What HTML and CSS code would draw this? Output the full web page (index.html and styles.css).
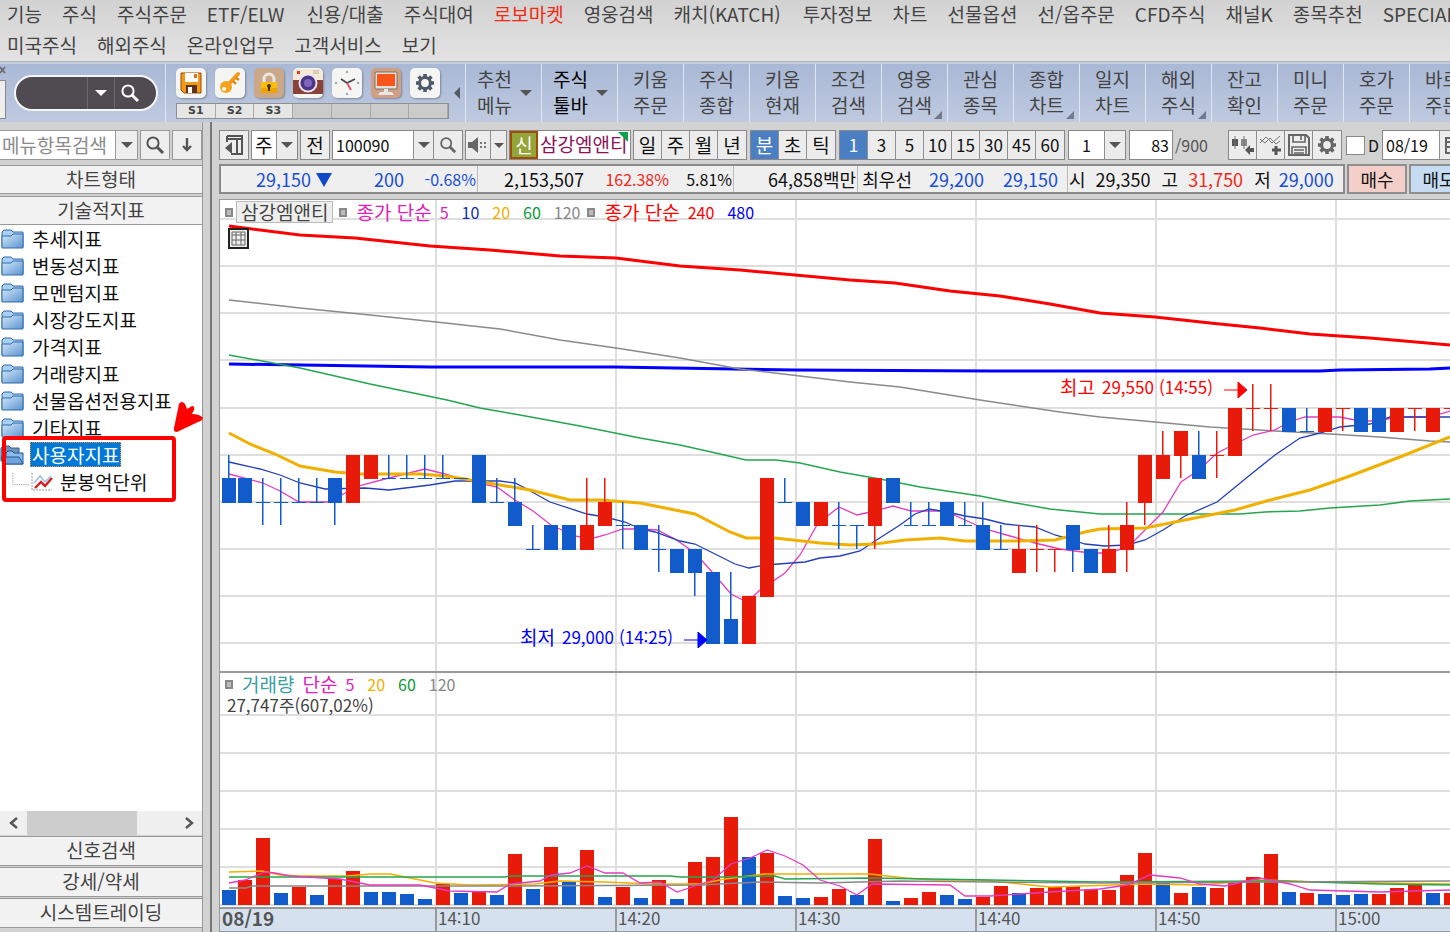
FILE: index.html
```html
<!DOCTYPE html>
<html lang="ko">
<head>
<meta charset="utf-8">
<meta name="viewport" content="width=device-width, initial-scale=1">
<title>키움종합차트</title>
<link rel="stylesheet" href="styles.css">
</head>
<body>
<svg class="defs" width="0" height="0" aria-hidden="true">
  <defs>
    <linearGradient id="folderFill" x1="0" y1="0" x2="1" y2="1"><stop offset="0" stop-color="#d4e9fb"/><stop offset="1" stop-color="#5b93cf"/></linearGradient>
    <symbol id="folder" viewBox="0 0 24 20">
      <path d="M2 18V3l2-2h7l2 2h10v15z" fill="#a9cff2" stroke="#2f6aa8" stroke-width="1"/>
      <path d="M2 7h9l2-2h10v14H2z" fill="url(#folderFill)" stroke="#2f6aa8" stroke-width="1"/>
    </symbol>
    <symbol id="lens" viewBox="0 0 20 20">
      <circle cx="8" cy="8" r="5.6" fill="none" stroke="currentColor" stroke-width="2"/>
      <path d="M12 12l6 6" stroke="currentColor" stroke-width="3"/>
    </symbol>
    <symbol id="gear" viewBox="0 0 20 20">
      <circle cx="10" cy="10" r="5.4" fill="none" stroke="currentColor" stroke-width="3"/>
      <g stroke="currentColor" stroke-width="3.6"><path d="M10 1v3M10 16v3M1 10h3M16 10h3M3.6 3.6l2.2 2.2M14.2 14.2l2.2 2.2M3.6 16.4l2.2-2.2M14.2 5.8l2.2-2.2"/></g>
    </symbol>
  </defs>
</svg>

<div class="app">
  <nav class="menu" aria-label="주 메뉴">
    <div class="menu-row">
      <a href="#">기능</a><a href="#">주식</a><a href="#">주식주문</a><a href="#" class="latin">ETF/ELW</a><a href="#">신용/대출</a><a href="#">주식대여</a><a href="#" class="hot">로보마켓</a><a href="#">영웅검색</a><a href="#" class="latin">캐치(KATCH)</a><a href="#">투자정보</a><a href="#">차트</a><a href="#">선물옵션</a><a href="#">선/옵주문</a><a href="#">CFD주식</a><a href="#">채널K</a><a href="#">종목추천</a><a href="#">SPECIAL</a>
    </div>
    <div class="menu-row">
      <a href="#">미국주식</a><a href="#">해외주식</a><a href="#">온라인업무</a><a href="#">고객서비스</a><a href="#">보기</a>
    </div>
  </nav>

  <header class="toolbar">
    <div class="quick">
      <div class="grip"><svg width="6" height="8" viewBox="0 0 6 8"><path d="M0 1l5 6M5 1L0 7" stroke="#666" stroke-width="1.5"/></svg><i></i></div>
      <div class="pill">
        <input type="text" aria-label="화면 검색">
        <button type="button" aria-label="최근 검색"><i class="tri"></i></button>
        <button type="button" aria-label="검색"><svg width="20" height="20"><use href="#lens"/></svg></button>
      </div>
    </div>
    <div class="shortcuts">
      <div class="icons">
        <button type="button" aria-label="저장"><svg viewBox="0 0 30 30"><path d="M5 5h20v20H8l-3-3z" fill="#f39a12" stroke="#9b4a08"/><path d="M9 5h13v9H9z" fill="#fff"/><path d="M18 6h3v4h-3z" fill="#e4701e"/><path d="M10 17h11v8H10z" fill="#5b3420"/><path d="M12 19h4v6h-4z" fill="#fff"/></svg></button>
        <button type="button" aria-label="열쇠"><svg viewBox="0 0 30 30"><path d="M12 18L23 6" stroke="#f39a16" stroke-width="4" stroke-linecap="round"/><path d="M18 13l3 3M21 10l3 2" stroke="#e08010" stroke-width="2.4"/><circle cx="11" cy="19" r="6" fill="#f5a31c"/><circle cx="9" cy="21" r="2" fill="#fff"/></svg></button>
        <button type="button" class="tan" aria-label="잠금"><svg viewBox="0 0 30 30"><path d="M10 15v-4a5 5 0 0 1 10 0v4" fill="none" stroke="#e8e8e4" stroke-width="3"/><path d="M7 14h16v11H7z" fill="#fbbd08"/><path d="M7 20h16v5H7z" fill="#f0a400"/><circle cx="15" cy="18" r="2" fill="#4a3209"/><path d="M14 18h2v5h-2z" fill="#4a3209"/></svg></button>
        <button type="button" aria-label="캡처"><svg viewBox="0 0 30 30"><path d="M0 9h30v17H0z" fill="#8a4238"/><path d="M0 6a5 5 0 0 1 5-5h20a5 5 0 0 1 5 5v6H0z" fill="#f7ead4"/><path d="M4 3h3v3H4z" fill="#ec3b2d"/><path d="M20 2h6v4h-6z" fill="#d8d0b8"/><circle cx="15" cy="15" r="9.5" fill="#ece4f0"/><circle cx="15" cy="15" r="7.6" fill="#4b3687"/><circle cx="15" cy="15" r="4" fill="#8365bd"/></svg></button>
        <button type="button" aria-label="시계"><svg viewBox="0 0 30 30"><g fill="#9bb2bd"><circle cx="15" cy="4" r="1.3"/><circle cx="26" cy="15" r="1.3"/><circle cx="15" cy="26" r="1.3"/><circle cx="4" cy="15" r="1.3"/></g><path d="M9 11l6 4 8-4" fill="none" stroke="#3f4a50" stroke-width="1.8"/><path d="M15 15l4 7" stroke="#ef4858" stroke-width="1.8"/></svg></button>
        <button type="button" class="rose" aria-label="모니터"><svg viewBox="0 0 30 30"><rect x="4" y="4" width="22" height="17" rx="1" fill="#e8e0d8" stroke="#78706a"/><path d="M6 6h18v12H6z" fill="#f95519"/><path d="M13 21h4v3h4l2 3H7l2-3h4z" fill="#e8e7e4"/></svg></button>
        <button type="button" class="slate" aria-label="설정"><svg viewBox="-5 -5 30 30"><use href="#gear" width="20" height="20"/></svg></button>
      </div>
      <div class="slots"><button type="button">S1</button><button type="button">S2</button><button type="button">S3</button><i></i><i></i><i></i><i></i></div>
    </div>
    <button type="button" class="collapse" aria-label="접기"><i></i></button>
    <div class="tools">
      <button type="button" class="drop">추천<br>메뉴<i class="tri"></i></button>
      <button type="button" class="drop on">주식<br>툴바<i class="tri"></i></button>
      <button type="button">키움<br>주문</button>
      <button type="button">주식<br>종합</button>
      <button type="button">키움<br>현재</button>
      <button type="button">조건<br>검색</button>
      <button type="button" class="more">영웅<br>검색</button>
      <button type="button">관심<br>종목</button>
      <button type="button" class="more">종합<br>차트</button>
      <button type="button">일지<br>차트</button>
      <button type="button" class="more">해외<br>주식</button>
      <button type="button">잔고<br>확인</button>
      <button type="button">미니<br>주문</button>
      <button type="button">호가<br>주문</button>
      <button type="button">바로<br>주문</button>
    </div>
  </header>

  <div class="body">
    <aside class="side">
      <div class="side-search">
        <input type="text" placeholder="메뉴항목검색" aria-label="메뉴항목검색">
        <button type="button" class="narrow" aria-label="목록"><i class="tri"></i></button>
        <button type="button" class="gap" aria-label="찾기"><svg width="20" height="20"><use href="#lens"/></svg></button>
        <button type="button" class="gap" aria-label="아래로"><svg width="12" height="16" viewBox="0 0 12 16"><path d="M6 1v12M2 9l4 4 4-4" fill="none" stroke="currentColor" stroke-width="2.4"/></svg></button>
      </div>
      <button type="button" class="fold">차트형태</button>
      <button type="button" class="fold">기술적지표</button>
      <ul class="tree">
        <li><svg><use href="#folder"/></svg><span>추세지표</span></li>
        <li><svg><use href="#folder"/></svg><span>변동성지표</span></li>
        <li><svg><use href="#folder"/></svg><span>모멘텀지표</span></li>
        <li><svg><use href="#folder"/></svg><span>시장강도지표</span></li>
        <li><svg><use href="#folder"/></svg><span>가격지표</span></li>
        <li><svg><use href="#folder"/></svg><span>거래량지표</span></li>
        <li><svg><use href="#folder"/></svg><span>선물옵션전용지표</span></li>
        <li><svg><use href="#folder"/></svg><span>기타지표</span></li>
        <li><svg viewBox="0 0 24 20"><path d="M1 16V3l2-2h6l2 2h8v13z" fill="#7192b8" stroke="#365f8e"/><path d="M6 19V8l2-2h4l2 2h9v11z" fill="#8bbbe9" stroke="#24568f"/><path d="M1 12h18l4 7H3z" fill="#6da4dc" stroke="#24568f"/></svg><span class="picked">사용자지표</span></li>
        <li class="leaf"><svg class="branch" viewBox="0 0 20 20"><path d="M1 0v13h18" fill="none" stroke="#888" stroke-dasharray="1 1"/></svg><svg viewBox="0 0 22 20"><path d="M1 1v17h20" fill="none" stroke="#999" stroke-dasharray="2 1"/><path d="M3 11l6-7 5 6 6-6" fill="none" stroke="#9cc0e8" stroke-width="1.6"/><path d="M4 16l6-6 4 4 7-8" fill="none" stroke="#d41f1f" stroke-width="2.4"/></svg><span>분봉억단위</span></li>
      </ul>
      <div class="mark"></div>
      <svg class="pointer" viewBox="0 0 32 32" aria-hidden="true"><path d="M10 1q3 0 5 7l5-3q3 0 2 4l-2 4q8 0 11 4-1 3-5 4L5 31q-4 0-3-4L7 3q1-2 3-2z" fill="#f00"/></svg>
      <div class="hbar">
        <button type="button" aria-label="왼쪽"><svg width="10" height="12" viewBox="0 0 10 12"><path d="M8 1L2 6l6 5" fill="none" stroke="#555" stroke-width="2.4"/></svg></button>
        <span class="thumb"></span>
        <button type="button" aria-label="오른쪽"><svg width="10" height="12" viewBox="0 0 10 12"><path d="M2 1l6 5-6 5" fill="none" stroke="#555" stroke-width="2.4"/></svg></button>
      </div>
      <button type="button" class="fold">신호검색</button>
      <button type="button" class="fold">강세/약세</button>
      <button type="button" class="fold">시스템트레이딩</button>
    </aside>

    <main class="main">
      <div class="controls">
        <div class="set"><button type="button" class="w28" aria-label="패널 접기"><svg width="18" height="20" viewBox="0 0 18 20"><path d="M2 1h15v18H6M2 1v6M12 5v14M2 4h15" fill="none" stroke="#555" stroke-width="2"/><path d="M0 13l7-6v12z" fill="#555"/></svg></button></div>
        <div class="set"><select class="w25" aria-label="시장"><option>주</option></select><button type="button" class="w20" aria-label="시장 목록"><i class="tri"></i></button></div>
        <div class="set"><button type="button" class="w28">전</button></div>
        <div class="set"><input class="w81" type="text" value="100090" aria-label="종목코드"><button type="button" class="w20" aria-label="최근 종목"><i class="tri"></i></button><button type="button" class="w28" aria-label="종목 검색"><svg width="18" height="18"><use href="#lens"/></svg></button></div>
        <div class="set"><button type="button" class="w25" aria-label="소리"><svg width="20" height="16" viewBox="0 0 20 16"><path d="M0 5h4l6-5v16l-6-5H0z" fill="#666"/><path d="M12 5h2v2h-2zM16 5h2v2h-2zM12 9h2v2h-2zM16 9h2v2h-2z" fill="#777"/></svg></button><button type="button" class="w15" aria-label="소리 설정"><i class="tri small"></i></button></div>
        <div class="set stock"><b>신</b><span>삼강엠앤티</span></div>
        <div class="set"><button type="button" class="w28">일</button><button type="button" class="w28">주</button><button type="button" class="w28">월</button><button type="button" class="w28">년</button></div>
        <div class="set loose"><button type="button" class="w28 active">분</button><button type="button" class="w28">초</button><button type="button" class="w28">틱</button></div>
        <div class="set loose nums"><button type="button" class="w28 active">1</button><button type="button" class="w28">3</button><button type="button" class="w28">5</button><button type="button" class="w28">10</button><button type="button" class="w28">15</button><button type="button" class="w28">30</button><button type="button" class="w28">45</button><button type="button" class="w28">60</button></div>
        <div class="set loose"><select class="w36 num" aria-label="분 간격"><option>1</option></select><button type="button" class="w20" aria-label="간격 목록"><i class="tri"></i></button></div>
        <div class="set loose"><input class="w42" type="text" value="83" aria-label="표시 봉수"></div>
        <span class="total">/900</span>
        <div class="set"><button type="button" class="w28" aria-label="봉 추가"><svg width="22" height="20" viewBox="0 0 22 20"><path d="M0 4h6v7H0z" fill="#555"/><path d="M9 4h6v7H9z" fill="#888"/><path d="M3 1v13M12 1v13" stroke="#777"/><path d="M13 15l5-5v3h4v4h-4v3z" fill="#555"/></svg></button><button type="button" class="w28" aria-label="지표 추가"><svg width="22" height="20" viewBox="0 0 22 20"><path d="M0 8l6-6 6 6 8-7M0 4l5 4 5-5 6 6 4-3" fill="none" stroke="#777"/><path d="M16 11v9M12 15h9" stroke="#555" stroke-width="3"/></svg></button><button type="button" class="w28" aria-label="저장"><svg width="22" height="22" viewBox="0 0 22 22"><path d="M1 1h17l3 3v17H1z" fill="#eee" stroke="#666" stroke-width="2"/><path d="M5 1v7h12V1M4 21v-8h14v8M13 2v4M6 16h10M6 19h10" fill="none" stroke="#666" stroke-width="1.6"/></svg></button><button type="button" class="w28" aria-label="설정"><svg width="20" height="20"><use href="#gear"/></svg></button></div>
        <label class="check"><input type="checkbox">D</label>
        <div class="set"><input class="w57" type="text" value="08/19" aria-label="날짜"><button type="button" class="w28" aria-label="달력"><svg width="18" height="18" viewBox="0 0 18 18"><path d="M1 2h16v15H1zM1 6h16M6 6v11M12 6v11M1 11h16" fill="none" stroke="#666" stroke-width="2"/></svg></button></div>
      </div>

      <div class="info">
        <div class="quote">
          <div class="cell down"><span class="c110">29,150 <i class="tri price"></i></span><span class="c72">200</span><span class="c72 pct">-0.68%</span></div>
          <div class="cell"><span class="c105">2,153,507</span><span class="c85 pct up">162.38%</span><span class="c63 pct">5.81%</span></div>
          <div class="cell"><span class="c121">64,858백만</span></div>
          <div class="cell"><span class="c54">최우선</span><span class="c72 down">29,200</span><span class="c74 last down">29,150</span></div>
          <div class="cell"><span>시</span><span class="c65">29,350</span><span class="lead">고</span><span class="c65 up">31,750</span><span class="lead">저</span><span class="c63 down">29,000</span></div>
        </div>
        <button type="button" class="buy">매수</button>
        <button type="button" class="sell">매도</button>
      </div>

      <section class="chart">
        <svg id="plot" viewBox="220 200 1230 732" role="img" aria-label="삼강엠앤티 1분 차트"></svg>
        <div class="legend top"><i class="dot"></i><span class="name">삼강엠앤티</span><i class="dot"></i><span class="m5 word">종가 단순</span><b class="m5">5</b><b class="m10">10</b><b class="m20">20</b><b class="m60">60</b><b class="m120">120</b><i class="dot tight"></i><span class="m240 word">종가 단순</span><b class="m240">240</b><b class="m480">480</b></div>
        <svg class="gridicon" viewBox="0 0 21 21" aria-hidden="true"><path d="M1 1h19v19H1z" fill="#eee" stroke="#222" stroke-width="2"/><path d="M4 4h13v13H4zM8 4v13M13 4v13M4 7h13M4 12h13" fill="none" stroke="#666"/></svg>
        <div class="legend vol"><i class="dot"></i><span class="teal word">거래량</span><span class="m5 word">단순</span><b class="m5">5</b><b class="m20">20</b><b class="m60">60</b><b class="m120">120</b></div>
        <div class="volnote">27,747주(607,02%)</div>
      </section>
    </main>
  </div>
</div>
<script src="chart.js"></script>
</body>
</html>
```
FILE: styles.css
```css
* { box-sizing: border-box; }
body {
  margin: 0;
  font-family: "Noto Sans CJK KR", "Liberation Sans", sans-serif;
  font-size: 19px;
  line-height: 26px;
  color: #111;
  background: #d2d2d2;
  overflow: hidden;
}
button, input, select {
  font: inherit;
  color: inherit;
  margin: 0;
  padding: 0;
  border: 0;
  border-radius: 0;
  background: none;
  appearance: none;
}
button { display: flex; align-items: center; justify-content: center; white-space: nowrap; }
.defs { position: absolute; }
.app { display: flex; flex-direction: column; height: 100vh; }
.tri { border: 6px solid transparent; border-top-color: #555; border-bottom: 0; }
.tri.small { border-width: 5px; border-bottom: 0; }

/* menu */
.menu { background: linear-gradient(#d2d2d2, #e3e3e3); border-bottom: 1px solid #b4b4b4; color: #444; flex: none; }
.menu-row { display: flex; gap: 20px; padding-left: 7px; height: 27px; align-items: center; white-space: nowrap; overflow: hidden; }
.menu-row + .menu-row { height: 34px; padding-top: 2px; }
.menu a { color: inherit; text-decoration: none; }
.menu a.hot { color: #f02a12; }
.menu a.latin { padding-right: 2px; }

/* main toolbar */
.toolbar { display: flex; flex: none; height: 60px; background: linear-gradient(#a9b8d5, #bfcae0); border-top: 2px solid #c4cddd; overflow: hidden; }
.quick { flex: none; width: 166px; display: flex; align-items: center; border-right: 1px solid #dfe6f1; }
.grip { width: 14px; align-self: stretch; display: flex; flex-direction: column; gap: 6px; padding-top: 2px; }
.grip i { width: 6px; height: 39px; background: #eee; border: 1px solid #888; border-left: 0; }
.pill { display: flex; width: 144px; height: 36px; border: 2px solid #f4f6fa; border-radius: 18px; background: #4f4b50; color: #fff; overflow: hidden; }
.pill input { flex: 1; min-width: 0; }
.pill button { border-left: 1px solid #6b686c; width: 27px; color: #fff; }
.pill button:last-child { width: 42px; padding-right: 12px; }
.pill .tri { border-top-color: #fff; }
.shortcuts { flex: none; width: 282px; padding: 4px 0 0 10px; }
.icons { display: flex; gap: 9px; }
.icons button { width: 30px; height: 30px; border-radius: 5px; background: #f5f5f4; box-shadow: 1px 1px 2px #7d8799; overflow: hidden; }
.icons svg { width: 30px; height: 30px; }
.icons .tan { background: #cba889; }
.icons .rose { background: #cf9f86; }
.icons .slate { color: #4d5968; }
.slots { display: flex; width: 273px; height: 16px; margin-top: 5px; border: 1px solid #909090; }
.slots > * { width: 39px; height: 14px; background: #cbcbcb; border-right: 1px solid #a8a8a8; font: bold 11px/14px "DejaVu Sans", sans-serif; color: #444; }
.slots button { background: #e6e6e6; }
.collapse { flex: none; width: 18px; border-right: 1px solid #dfe6f1; }
.collapse i { border: 6px solid transparent; border-right-color: #555c66; border-left: 0; }
.tools { display: flex; }
.tools button { flex: none; display: block; position: relative; width: 66px; padding-bottom: 2px; border-right: 1px solid #dfe6f1; color: #444; text-align: center; }
.tools .drop { width: 76px; padding-right: 18px; }
.tools .on { color: #000; }
.tools .tri { position: absolute; right: 9px; top: 26px; }
.tools .more::after { content: ""; position: absolute; right: 5px; bottom: 3px; border: 4px solid #6f7a8b; border-top-color: transparent; border-left-color: transparent; }

/* body */
.body { flex: 1; min-height: 0; display: flex; }
.side { position: relative; flex: none; width: 203px; padding: 8px 0 4px; display: flex; flex-direction: column; border-right: 1px solid #999; }
.side-search { display: flex; height: 30px; margin-bottom: 3px; color: #555; }
.side-search input { flex: 1; min-width: 0; background: #fff; border: 1px solid #999; border-left: 0; padding-left: 2px; }
.side-search input::placeholder { color: #8b8b8b; opacity: 1; }
.side-search button { width: 30px; background: #eee; border: 1px solid #999; }
.side-search .narrow { width: 22px; border-left: 0; }
.side-search .gap { margin-left: 2px; }
.fold { flex: none; height: 29px; margin-top: 2px; padding-bottom: 2px; border: 1px solid #999; border-left: 0; border-right: 0; background: #f2f2f2; color: #444; }
.tree { flex: 1; margin: 0; padding: 0; list-style: none; background: #fff; min-height: 0; overflow: hidden; }
.tree li { display: flex; align-items: center; gap: 6px; height: 27px; white-space: nowrap; color: #111; }
.tree svg { width: 24px; height: 20px; }
.tree span { padding: 0 2px; line-height: 25px; }
.tree .picked { background: #0078d7; color: #fff; outline: 1px dotted #f09030; outline-offset: -1px; }
.tree .leaf { padding-left: 12px; gap: 4px; }
.tree .branch { width: 18px; margin-right: -4px; }
.mark { position: absolute; left: 2px; top: 314px; width: 174px; height: 66px; border: 4px solid #f00; border-radius: 4px; }
.pointer { position: absolute; left: 172px; top: 279px; width: 32px; height: 32px; z-index: 1; }
.hbar { display: flex; height: 24px; background: #f0f0f0; }
.hbar button { width: 27px; }
.hbar .thumb { width: 110px; margin-right: auto; background: #cdcdcd; }
.hbar ~ .fold { height: 30px; margin-top: 1px; }

.main { flex: 1; min-width: 0; margin-left: 7px; padding: 8px 0 0 7px; border-left: 2px solid #777; display: flex; flex-direction: column; overflow: hidden; }
.controls { display: flex; flex: none; gap: 2px; height: 30px; margin-bottom: 4px; }
.set { display: flex; flex: none; border: 1px solid #888; }
.set > * { border-right: 1px solid #909090; background: #ececec; height: 28px; }
.set > :last-child { border-right: 0; }
.loose { margin-left: 1px; }
.set input, .set select { background: #fff; padding: 0 3px; font-size: 16px; }
.set select { font-size: 19px; }
.set .num { font-size: 16px; padding-left: 13px; }
.set .active { background: #4a7fc4; color: #fff; }
.nums button { font-size: 17px; }
.w15 { width: 15px; } .w20 { width: 20px; } .w25 { width: 25px; } .w28 { width: 28px; }
.w36 { width: 36px; } .w42 { width: 42px; text-align: right; } .w57 { width: 57px; } .w81 { width: 81px; }
.set .tri { flex: none; }
.set svg { color: #666; }
.stock b { width: 28px; background: #93a438; color: #fff; border: 2px solid #a04d0c; font-weight: 400; text-align: center; line-height: 24px; }
.stock span { position: relative; width: 92px; background: #fff; color: #8b1258; padding-left: 2px; white-space: nowrap; }
.stock span::after { content: ""; position: absolute; right: 2px; top: 1px; border: 5px solid #0aa34a; border-left-color: transparent; border-bottom-color: transparent; }
.total { flex: none; width: 51px; font-size: 16px; line-height: 30px; color: #555; }
.check { flex: none; display: flex; align-items: center; gap: 3px; width: 36px; padding-left: 2px; font-size: 16px; }
.check input { flex: none; width: 19px; height: 19px; background: #fff; border: 1px solid #888; }

.info { display: flex; flex: none; height: 30px; gap: 2px; margin-bottom: 5px; font-size: 18px; white-space: nowrap; }
.quote { display: flex; flex: none; width: 1126px; border: 2px solid #8a8a8a; background: #efefef; }
.cell { display: flex; border-right: 1px solid #bbb; padding: 0 1px; }
.cell:last-child { border: 0; }
.cell span { flex: none; text-align: right; }
.cell .lead { margin-left: 11px; }
.c54 { width: 53px; } .c63 { width: 63px; } .c65 { width: 65px; } .c72 { width: 72px; } .c74 { width: 74px; } .c85 { width: 85px; } .c105 { width: 105px; } .c110 { width: 110px; } .c121 { width: 121px; }
.cell .last { margin-right: 8px; }
.pct { font-size: 16px; }
.down { color: #1a4fd0; }
.up { color: #f0281a; }
.tri.price { display: inline-block; border-width: 8px; border-top: 14px solid #1048c8; border-bottom: 0; }
.buy, .sell { flex: none; width: 60px; border: 2px solid #8f8f8f; background: #f4cfca; }
.sell { background: #c5dcf2; }

.chart { position: relative; flex: 1; min-height: 0; background: #fff; border: 1px solid #999; border-right: 0; overflow: hidden; }
#plot { display: block; width: 100%; height: auto; }
.legend { position: absolute; left: 5px; display: flex; align-items: center; white-space: nowrap; font-size: 19px; line-height: 20px; }
.legend.top { top: 1px; }
.legend.vol { top: 474px; }
.legend b { font-weight: 400; font-size: 16px; margin-right: 13px; }
.legend .word { margin-right: 8px; }
.dot { width: 8px; height: 9px; border: 2px solid #888; background: #bbb; margin-right: 9px; }
.dot.tight { margin-left: -6px; }
.name { background: #eee; border: 1px solid #bbb; padding: 0 4px; margin: 0 6px 0 -6px; color: #444; }
.teal { color: #3aa0a0; }
.m5 { color: #e020b8; } .m10 { color: #1530a8; } .m20 { color: #f0b000; } .m60 { color: #0a9a38; } .m120 { color: #888; } .m240 { color: #f00; } .m480 { color: #00f; }
.gridicon { position: absolute; left: 8px; top: 28px; width: 21px; height: 21px; }
.volnote { position: absolute; left: 7px; top: 495px; font-size: 17px; line-height: 20px; color: #444; }

#plot .grid { stroke: #dedede; stroke-width: 2; shape-rendering: crispEdges; }
#plot .frame { stroke: #999; stroke-width: 2; shape-rendering: crispEdges; }
#plot .bar { shape-rendering: crispEdges; }
#plot .line { fill: none; stroke-width: 1; }
#plot text { font-size: 17px; fill: #555; }
#plot .word { font-size: 19px; }
#plot .day { font-size: 19px; font-weight: 700; }
#plot .high { fill: #f00; }
#plot .low { fill: #00f; }
```
FILE: chart.js
```javascript
(function () {
  var svg = document.getElementById('plot');
  var NS = 'http://www.w3.org/2000/svg';
  var RED = '#e81a0a', BLUE = '#115bcb';
  var BASE = 643, STEP = 23.55, FLOOR = 905;

  function add(tag, attrs, text) {
    var el = document.createElementNS(NS, tag);
    Object.keys(attrs).forEach(function (k) { el.setAttribute(k, attrs[k]); });
    if (text) el.textContent = text;
    svg.appendChild(el);
  }
  function cx(i) { return i === 0 ? 229 : 227 + 18 * i; }
  function py(level) { return Math.round(BASE - STEP * level); }
  function rule(cls, x1, y1, x2, y2) { add('line', { 'class': cls, x1: x1, y1: y1, x2: x2, y2: y2 }); }
  function line(color, width, points) { add('polyline', { 'class': 'line', points: points, style: 'stroke:' + color + ';stroke-width:' + width }); }

  // grid
  for (var l = 0; l <= 18; l += 2) rule('grid', 220, py(l), 1450, py(l));
  [715, 753, 791, 829, 867, 905].forEach(function (y) { rule('grid', 220, y, 1450, y); });
  add('rect', { x: 220, y: 908, width: 1230, height: 24, fill: '#d6e1ef' });
  [436, 616, 796, 976, 1156, 1336].forEach(function (x, n) {
    rule('grid', x, 200, x, 908);
    rule('frame', x, 908, x, 932);
    add('text', { x: x + 2, y: 925 }, n < 5 ? '14:' + (n + 1) + '0' : '15:00');
  });
  add('text', { 'class': 'day', x: 222, y: 926 }, '08/19');
  rule('frame', 220, 672, 1450, 672);
  rule('frame', 220, 908, 1450, 908);

  // price averages
  line('#f00', 3, '229,226 300,235 355,238 430,246 490,250 560,256 616,258 680,266 740,270 795,275 850,280 895,283 950,291 1000,296 1050,304 1100,313 1155,317 1210,323 1260,328 1310,334 1370,338 1450,345');
  line('#00f', 3, '229,364 430,367 615,367 795,370 990,371 1320,371 1340,370 1430,369 1450,368');
  line('#8a8a8a', 1.5, '229,300 300,308 370,315 436,322 500,329 560,340 616,348 680,358 740,369 800,376 850,382 900,387 980,400 1060,412 1100,417 1155,422 1210,427 1275,431 1330,434 1380,437 1430,441 1450,442');
  line('#26a550', 1.5, '229,355 300,368 370,384 447,400 480,408 520,415 580,426 640,438 680,445 720,454 746,460 776,460 800,463 840,472 880,479 920,487 980,496 1010,502 1050,509 1100,514 1240,514 1265,512 1300,511 1330,508 1380,505 1410,501 1450,499');
  line('#e23cc0', 1.3, '229,474 263,483 280,491 299,502 330,502 350,490 362,485 385,479 405,474 425,469 445,474 465,480 497,487 515,500 533,511 551,525 575,536 590,539 605,535 623,529 641,529 657,530 675,539 695,553 713,573 731,594 747,602 760,590 785,573 800,555 817,525 830,514 839,507 857,515 875,511 893,506 911,511 945,511 965,520 985,529 1010,536 1035,543 1060,549 1090,553 1105,553 1127,548 1145,530 1163,512 1181,482 1199,470 1217,453 1235,444 1253,435 1275,430 1289,422 1305,417 1340,417 1360,421 1380,421 1395,417 1430,417 1450,411');
  line('#2440b4', 1.3, '229,462 260,469 280,475 300,483 325,489 365,488 389,490 430,485 455,481 500,481 515,483 525,488 550,502 587,514 605,517 625,522 641,529 655,532 680,541 695,544 713,553 735,564 749,568 765,565 805,562 820,558 840,556 860,551 875,541 900,525 915,514 929,509 947,512 965,516 985,519 1005,524 1035,527 1055,535 1073,540 1085,544 1105,546 1127,545 1145,540 1163,530 1185,516 1217,502 1250,475 1275,455 1300,438 1320,433 1340,427 1370,424 1390,417 1450,417');
  line('#f0b000', 3, '229,433 250,444 275,454 300,466 335,472 360,474 420,474 445,476 465,479 500,485 530,490 570,500 600,500 640,503 665,508 695,514 730,532 746,538 775,538 820,543 850,545 875,544 905,540 940,538 965,541 1020,541 1055,540 1085,532 1100,529 1145,528 1180,521 1235,510 1270,500 1310,490 1350,476 1400,457 1450,437');

  // candles: colour, body top, body bottom, high, low in 50-won steps above 29,000
  var candles = [
    'b7686', 'b7676', 'b6675', 'b6675', 'b6676', 'b6676', 'b7675', 'r8686', 'r8787', 'b7787', 'b7787', 'b7787', 'b7787', 'b7777',
    'b8686', 'b6676', 'b6575', 'b4454', 'b5454', 'b5454', 'r5474', 'r6575', 'b5564', 'b5454', 'b4453', 'b4343', 'b4342', 'b3030',
    'b1030', 'r2020', 'r7272', 'b6676', 'b6565', 'r6565', 'b5564', 'b5554', 'r7574', 'b7676', 'b5565', 'b5565', 'b6565', 'b5565',
    'b5464', 'b4454', 'r4353', 'r4453', 'r4443', 'b5453', 'b4343', 'r4353', 'r5463', 'r8685', 'r8797', 'r9897', 'b8797', 'r8897',
    'rA8A8', 'rAAB9', 'rAAB9', 'bA9A9', 'b99A9', 'rA9A9', 'rAAA9', 'bA9A9', 'bA9A9', 'rA9A9', 'rAAA9', 'rA9A9', 'rAAA9'
  ];
  candles.forEach(function (c, i) {
    var color = c[0] === 'r' ? RED : BLUE;
    var v = c.slice(1).split('').map(function (d) { return py(parseInt(d, 16)); });
    add('rect', { 'class': 'bar', x: cx(i) - 7, y: v[0], width: 14, height: Math.max(1, v[1] - v[0] + 1), fill: color });
    add('rect', { x: cx(i) - 1, y: v[2], width: 1.5, height: v[3] - v[2], fill: color });
  });

  // volume: colour and top edge
  var volume = 'b890 r880 r838 b893 r887 b895 r879 r871 b892 b892 b894 b899 r884 b893 r891 b895 r854 b889 r847 b882 r850 b897 r887 b898 r880 b899 r862 r857 r817 b857 r853 b896 b898 r897 r889 b895 r839 b901 r898 r892 b895 b899 r897 r886 b893 r888 r887 r886 r889 r890 r875 r853 b882 r893 b887 r888 r883 r877 r854 b892 r893 b894 b895 b894 r894 r888 r885 b893 r893'.split(' ');
  volume.forEach(function (v, i) {
    var top = +v.slice(1);
    add('rect', { 'class': 'bar', x: cx(i) - 7, y: top, width: 14, height: FLOOR - top, fill: v[0] === 'r' ? RED : BLUE });
  });
  line('#f0b000', 1.5, '229,872 262,871 280,875 300,876 347,876 371,874 390,874 410,878 435,883 470,885 535,884 560,881 605,882 650,884 700,884 725,879 765,874 870,874 905,878 935,880 980,880 1050,887 1145,884 1200,885 1260,880 1320,882 1450,884');
  line('#26a550', 1.5, '229,877 505,877 510,876 670,876 680,877 720,877 775,876 785,879 870,878 990,880 1100,882 1280,881 1380,884 1450,885');
  line('#888', 1.5, '229,888 246,888 252,886 500,886 700,885 760,882 820,883 900,881 1100,883 1450,881');
  line('#e23cc0', 1.3, '229,883 245,880 265,872 275,873 290,876 340,879 370,885 420,885 450,891 497,892 510,884 540,881 551,875 570,873 587,866 605,873 623,873 640,883 660,882 677,892 695,886 713,880 731,864 750,858 767,850 785,856 803,865 820,880 840,886 857,895 872,884 950,885 965,896 990,896 1050,892 1100,889 1127,885 1150,875 1180,878 1200,884 1225,886 1260,878 1290,884 1310,890 1380,892 1450,890');

  // extremes
  add('text', { 'class': 'high word', x: 1060, y: 395 }, '최고');
  add('text', { 'class': 'high', x: 1102, y: 394 }, '29,550');
  add('text', { 'class': 'high', x: 1159, y: 394 }, '(14:55)');
  add('path', { d: 'M1224 390h15M1238 382l9 8-9 8z', fill: '#f00', stroke: '#f00' });
  add('text', { 'class': 'low word', x: 520, y: 645 }, '최저');
  add('text', { 'class': 'low', x: 562, y: 644 }, '29,000');
  add('text', { 'class': 'low', x: 619, y: 644 }, '(14:25)');
  add('path', { d: 'M684 640h14M698 632l9 8-9 8z', fill: '#00f', stroke: '#00f' });
})();
```
